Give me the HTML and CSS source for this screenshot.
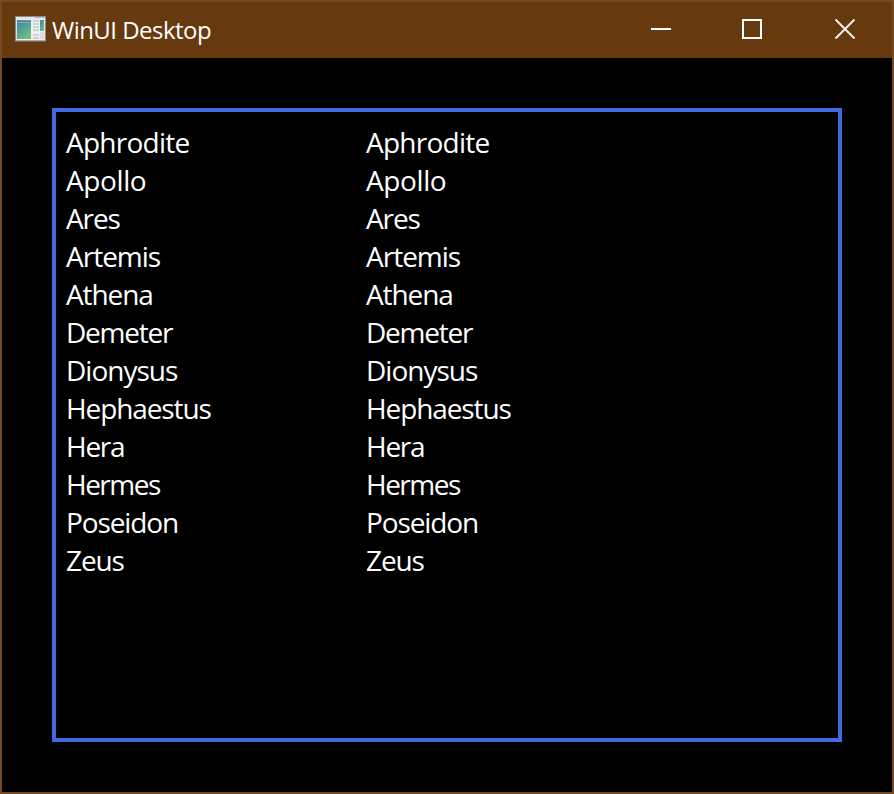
FILE: index.html
```html
<!DOCTYPE html>
<html lang="en">
<head>
<meta charset="utf-8">
<title>WinUI Desktop</title>
<link rel="stylesheet" href="styles.css">
</head>
<body>
<div class="window">
  <header class="titlebar">
    <svg class="app-icon" width="31" height="26" viewBox="0 0 31 26">
      <defs>
        <linearGradient id="pane" x1="0" y1="0" x2="0.6" y2="1">
          <stop offset="0" stop-color="#4a80a4"/>
          <stop offset="0.5" stop-color="#52a096"/>
          <stop offset="1" stop-color="#72c07e"/>
        </linearGradient>
        <linearGradient id="frame" x1="0" y1="0" x2="0" y2="1">
          <stop offset="0" stop-color="#e4e6ea"/>
          <stop offset="1" stop-color="#c9cacb"/>
        </linearGradient>
      </defs>
      <rect x="0.5" y="0.5" width="30" height="24.5" fill="url(#frame)" stroke="#898b8e"/>
      <path d="M21 1.5h2M24 1.5h2M27 1.5h2" stroke="#a5abb2"/>
      <rect x="1.5" y="3" width="28" height="21" fill="#f0f0f0"/>
      <rect x="2" y="4" width="14" height="19" fill="url(#pane)"/>
      <path d="M3 6.5h12" stroke="#7ba6b9"/>
      <path d="M18 5h6M18 8h6M18 11h6M18 14h6M18 19h6M18 22h6" stroke="#c4c6c8" stroke-width="1.6"/>
      <rect x="25" y="4" width="4" height="11" fill="url(#pane)"/>
      <rect x="25" y="16" width="4" height="7" fill="#dcdcdc"/>
    </svg>
    <h1 class="title">WinUI Desktop</h1>
    <div class="controls">
      <svg class="control" width="92" height="56" viewBox="0 0 92 56"><path d="M35 27h20"/></svg>
      <svg class="control" width="92" height="56" viewBox="0 0 92 56"><path d="M35 18h18v18h-18z"/></svg>
      <svg class="control close" width="92" height="56" viewBox="0 0 92 56"><path d="M35.5 17.5l19 19M54.5 17.5l-19 19"/></svg>
    </div>
  </header>
  <main class="content">
    <div class="panel">
      <ul class="names">
        <li>Aphrodite</li><li>Apollo</li><li>Ares</li><li>Artemis</li><li>Athena</li><li>Demeter</li><li>Dionysus</li><li>Hephaestus</li><li>Hera</li><li>Hermes</li><li>Poseidon</li><li>Zeus</li>
      </ul>
      <ul class="names">
        <li>Aphrodite</li><li>Apollo</li><li>Ares</li><li>Artemis</li><li>Athena</li><li>Demeter</li><li>Dionysus</li><li>Hephaestus</li><li>Hera</li><li>Hermes</li><li>Poseidon</li><li>Zeus</li>
      </ul>
    </div>
  </main>
</div>
</body>
</html>
```
FILE: styles.css
```css
* { box-sizing: border-box; }
body {
  margin: 0;
  background: #000;
  color: #fff;
  font-family: "Segoe UI", "Open Sans", "Noto Sans", sans-serif;
}
.window {
  display: flex;
  flex-direction: column;
  width: 894px;
  height: 794px;
  border: 2px solid #754a22;
  background: #000;
}
.titlebar {
  display: flex;
  align-items: center;
  height: 56px;
  padding-left: 13px;
  background: #66390e;
}
.app-icon { margin-right: 6px; margin-bottom: 3px; }
.title {
  margin: 0;
  font-size: 24px;
  font-weight: 400;
  line-height: 32px;
  letter-spacing: -0.53px;
}
.controls { display: flex; margin-left: auto; }
.control {
  display: block;
  fill: none;
  stroke: #fff;
  stroke-width: 2;
}
.close { stroke: #f4ece9; stroke-width: 2; }
.content {
  flex: 1;
  padding: 50px;
}
.panel {
  display: grid;
  grid-template-columns: 300px 300px;
  width: 790px;
  height: 634px;
  padding: 11px 10px;
  border: 4px solid #4169e1;
}
.names {
  margin: 0;
  padding: 0;
  list-style: none;
  font-size: 28px;
  line-height: 38px;
  letter-spacing: -1.1px;
}
/* Tracking tuned per name */
.names li:nth-child(1) { letter-spacing: -0.75px; }
.names li:nth-child(2) { letter-spacing: -0.4px; }
.names li:nth-child(4),
.names li:nth-child(7) { letter-spacing: -1px; }
.names li:nth-child(6),
.names li:nth-child(9) { letter-spacing: -1.25px; }
.names li:nth-child(10) { letter-spacing: -1.5px; }
```
